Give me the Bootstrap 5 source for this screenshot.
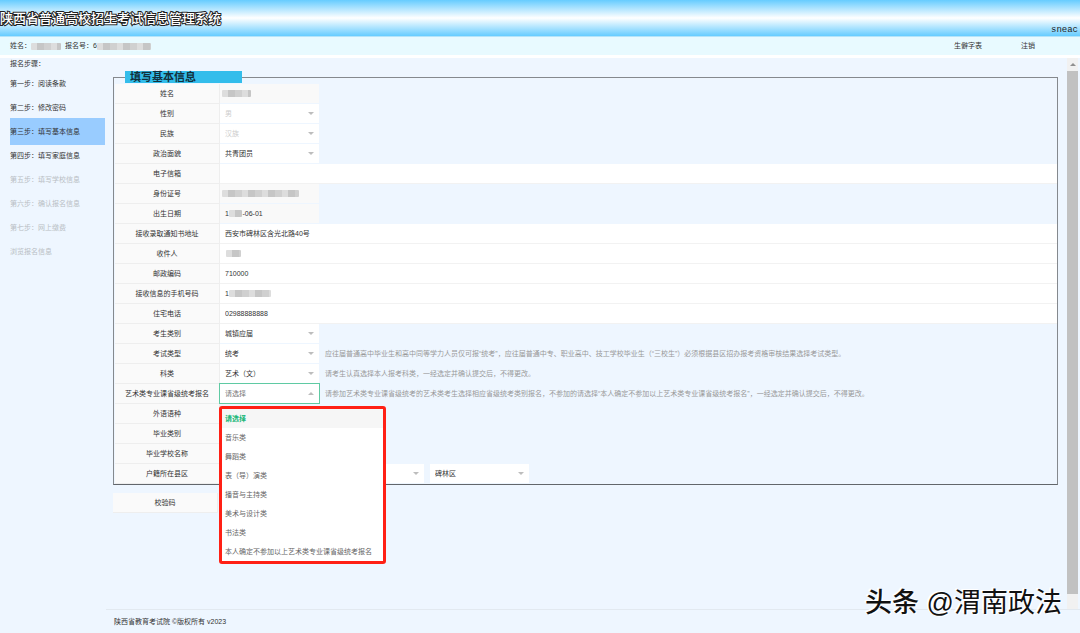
<!DOCTYPE html>
<html lang="zh-CN">
<head>
<meta charset="utf-8">
<meta name="viewport" content="width=device-width, initial-scale=1">
<title>陕西省普通高校招生考试信息管理系统</title>
<link href="https://cdn.jsdelivr.net/npm/bootstrap@5.3.0/dist/css/bootstrap.min.css" rel="stylesheet">
<style>
body{font-family:"Liberation Sans","Noto Sans CJK SC",sans-serif;font-size:7px;line-height:12px;color:#333;background:#eef6ff}
a{color:inherit;text-decoration:none}
.topbar{height:37px;background:linear-gradient(#66ccff,#fff 50%,#66ccff);border-bottom:1px solid #b4e4fa}
.site-title{font-size:13px;line-height:38px;font-weight:500;color:#fff;-webkit-text-stroke:2px #222;paint-order:stroke fill}
.org{font:9px/12px "Liberation Mono",monospace;color:#222;padding-right:2px}
.userbar{height:18px;background:#e8faff}
.userbar .who{margin-left:10px}
.userbar .links{gap:39px;margin-right:45px}
.white-gap{height:3px;background:#fff}
.steps{width:106px;padding:0 0 0 10px}
.steps .head{margin-bottom:2px}
.steps a,.steps span{display:flex;align-items:center;height:24px}
.steps .now{height:27px;margin:-2px 1px -1px 0;background:#99ccff}
.steps .off{color:#b9bec4}
.pane{padding:13px 9px 0 7px}
.box{border:1px solid #85898e;border-bottom-color:#62666b;position:relative;margin-top:6px;padding:6px 0 0 1px}
.box legend{position:absolute;top:-7px;left:11px;width:117px;height:12px;margin:0;padding-left:5px;background:#33bdeb;font-size:11px;line-height:12px;font-weight:700;color:#12303c}
.line{height:20px}
.tag{width:105px;height:20px;flex:none;display:flex;align-items:center;justify-content:center;background:#fafafa;border:solid #eee;border-width:0 1px 1px 0;white-space:nowrap}
.box input,.box select{height:19px;padding:0 5px;border:0;border-radius:0;font-size:7px;line-height:19px;color:#333;background-color:#fff;box-shadow:none}
.box input.wide{width:100%}
.line:has(.wide){background:#f2f2f2}
.box input[readonly]{background-color:#f9f9f9}
.box .short,.box select{width:99px;flex:none}
.box select{appearance:none;background-image:url("data:image/svg+xml,%3Csvg xmlns='http://www.w3.org/2000/svg' viewBox='0 0 6 3'%3E%3Cpath d='M0 0h6L3 3z' fill='%23bdbdbd'/%3E%3C/svg%3E");background-repeat:no-repeat;background-size:6px 3px;background-position:right 5px center}
.box select:disabled{color:#ccc;opacity:1}
.box select.opened{display:block;width:101px;height:21px;margin:-1px -1px 0;border:1px solid #5fcaa3;color:#777;background-image:url("data:image/svg+xml,%3Csvg xmlns='http://www.w3.org/2000/svg' viewBox='0 0 6 3'%3E%3Cpath d='M0 3h6L3 0z' fill='%23bdbdbd'/%3E%3C/svg%3E")}
.hint{color:#999;margin-left:6px;line-height:19px;white-space:nowrap}
.smear{height:7px;border-radius:1px;background:repeating-linear-gradient(90deg,#ddd 0 6px,#c6c6c6 6px 13px,#d0d0d0 13px 20px)}
.field{position:relative}
.field .smear{position:absolute;top:6px}
.options{position:absolute;z-index:5;top:22px;left:-1px;width:167px;margin:0;padding:0;list-style:none;border:3px solid #ff2015;border-radius:3px;background:#fff}
.options button{display:block;width:100%;height:19px;padding:0 0 0 3px;border:0;background:none;text-align:left;font-size:7px;line-height:19px;color:#666;white-space:nowrap}
.options .on{color:#16b777;font-weight:700;background:#f6f6f6}
.verify{margin-top:8px}
.rail{width:11px;margin-right:2px;background:#f1f1f1}
.rail .up{height:13px}
.rail .thumb{background:#c1c1c1;margin-bottom:15px}
footer{height:24px;margin-left:106px;padding-left:8px;border-top:1px solid #e2e9f0}
.mark-text{position:absolute;right:18px;bottom:10px;font-size:27px;line-height:40px;color:#111;text-shadow:-1px -1px 0 #fff,-2px -1px 0 #fff,1px 1px 0 #fff;z-index:9}
.mark-text b{font-weight:500}
</style>
</head>
<body class="vh-100 d-flex flex-column overflow-hidden position-relative">
<header class="topbar d-flex justify-content-between flex-shrink-0">
  <h1 class="site-title mb-0">陕西省普通高校招生考试信息管理系统</h1>
  <span class="org align-self-end">sneac</span>
</header>
<div class="userbar d-flex align-items-center flex-shrink-0">
  <span class="who">姓名：</span><span class="smear" style="width:30px"></span><span class="ms-1">报名号：6</span><span class="smear" style="width:54px"></span>
  <nav class="links d-flex ms-auto"><a href="#">生僻字表</a><a href="#">注销</a></nav>
</div>
<div class="white-gap flex-shrink-0"></div>
<main class="d-flex flex-grow-1" style="min-height:0">
  <nav class="steps flex-shrink-0" aria-label="报名步骤">
    <div class="head">报名步骤：</div>
    <a href="#">第一步：阅读条款</a>
    <a href="#">第二步：修改密码</a>
    <a href="#" class="now">第三步：填写基本信息</a>
    <a href="#">第四步：填写家庭信息</a>
    <span class="off">第五步：填写学校信息</span>
    <span class="off">第六步：确认报名信息</span>
    <span class="off">第七步：网上缴费</span>
    <span class="off">浏览报名信息</span>
  </nav>
  <form class="pane flex-grow-1">
    <fieldset class="box">
      <legend>填写基本信息</legend>
      <div class="line d-flex"><label class="tag" for="f1">姓名</label><div class="field"><input class="short" id="f1" readonly><span class="smear" style="left:2px;width:29px"></span></div></div>
      <div class="line d-flex"><label class="tag" for="f2">性别</label><select id="f2" disabled><option>男</option></select></div>
      <div class="line d-flex"><label class="tag" for="f3">民族</label><select id="f3" disabled><option>汉族</option></select></div>
      <div class="line d-flex"><label class="tag" for="f4">政治面貌</label><select id="f4"><option>共青团员</option></select></div>
      <div class="line d-flex"><label class="tag" for="f5">电子信箱</label><input class="wide" id="f5"></div>
      <div class="line d-flex"><label class="tag" for="f6">身份证号</label><div class="field"><input class="short" id="f6" readonly><span class="smear" style="left:2px;width:77px"></span></div></div>
      <div class="line d-flex"><label class="tag" for="f7">出生日期</label><div class="field"><input class="short" id="f7" readonly value="1       -06-01"><span class="smear" style="left:9px;width:13px"></span></div></div>
      <div class="line d-flex"><label class="tag" for="f8">接收录取通知书地址</label><input class="wide" id="f8" value="西安市碑林区含光北路40号"></div>
      <div class="line d-flex"><label class="tag" for="f9">收件人</label><div class="field flex-grow-1"><input class="wide" id="f9"><span class="smear" style="left:6px;width:15px"></span></div></div>
      <div class="line d-flex"><label class="tag" for="f10">邮政编码</label><input class="wide" id="f10" value="710000"></div>
      <div class="line d-flex"><label class="tag" for="f11">接收信息的手机号码</label><div class="field flex-grow-1"><input class="wide" id="f11" value="1"><span class="smear" style="left:9px;width:42px"></span></div></div>
      <div class="line d-flex"><label class="tag" for="f12">住宅电话</label><input class="wide" id="f12" value="02988888888"></div>
      <div class="line d-flex"><label class="tag" for="f13">考生类别</label><select id="f13"><option>城镇应届</option></select></div>
      <div class="line d-flex"><label class="tag" for="f14">考试类型</label><select id="f14"><option>统考</option></select><span class="hint">应往届普通高中毕业生和高中同等学力人员仅可报“统考”，应往届普通中专、职业高中、技工学校毕业生（“三校生”）必须根据县区招办报考资格审核结果选择考试类型。</span></div>
      <div class="line d-flex"><label class="tag" for="f15">科类</label><select id="f15"><option>艺术（文）</option></select><span class="hint">请考生认真选择本人报考科类，一经选定并确认提交后，不得更改。</span></div>
      <div class="line d-flex"><label class="tag" for="f16">艺术类专业课省级统考报名</label>
        <div class="field"><select id="f16" class="opened"><option>请选择</option></select>
          <ul class="options">
            <li><button type="button" class="on">请选择</button></li>
            <li><button type="button">音乐类</button></li>
            <li><button type="button">舞蹈类</button></li>
            <li><button type="button">表（导）演类</button></li>
            <li><button type="button">播音与主持类</button></li>
            <li><button type="button">美术与设计类</button></li>
            <li><button type="button">书法类</button></li>
            <li><button type="button">本人确定不参加以上艺术类专业课省级统考报名</button></li>
          </ul></div>
        <span class="hint">请参加艺术类专业课省级统考的艺术类考生选择相应省级统考类别报名，不参加的请选择“本人确定不参加以上艺术类专业课省级统考报名”，一经选定并确认提交后，不得更改。</span></div>
      <div class="line d-flex"><span class="tag">外语语种</span></div>
      <div class="line d-flex"><span class="tag">毕业类别</span></div>
      <div class="line d-flex"><span class="tag">毕业学校名称</span></div>
      <div class="line d-flex"><label class="tag" for="f20">户籍所在县区</label><div class="d-flex" style="gap:6px"><select id="f20"></select><select aria-label="市"></select><select aria-label="区县"><option>碑林区</option></select></div></div>
    </fieldset>
    <div class="verify"><span class="tag">校验码</span></div>
  </form>
  <div class="rail d-flex flex-column flex-shrink-0" aria-hidden="true">
    <div class="up d-flex align-items-center justify-content-center"><svg width="6" height="3" viewBox="0 0 6 3"><path d="M0 3h6L3 0z" fill="#909090"/></svg></div>
    <div class="thumb flex-grow-1"></div>
  </div>
</main>
<footer class="d-flex align-items-center flex-shrink-0">陕西省教育考试院 ©版权所有 v2023</footer>
<div class="mark-text"><b>头条</b> @渭南政法</div>
<script src="https://cdn.jsdelivr.net/npm/bootstrap@5.3.0/dist/js/bootstrap.bundle.min.js"></script>
</body>
</html>
